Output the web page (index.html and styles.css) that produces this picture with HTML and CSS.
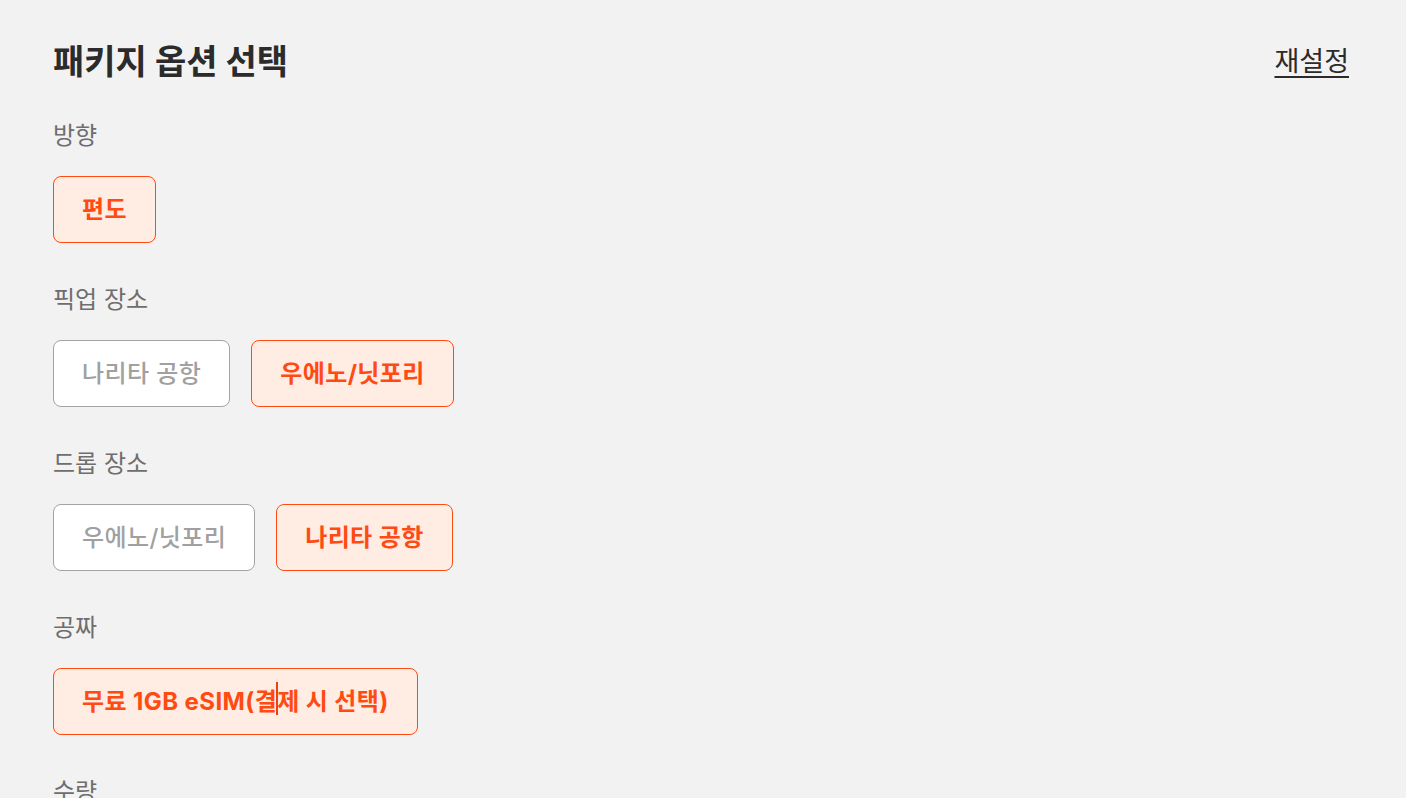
FILE: index.html
```html
<!DOCTYPE html>
<html lang="ko">
<head>
  <meta charset="UTF-8">
  <meta name="viewport" content="width=device-width, initial-scale=1.0">
  <title>패키지 옵션 선택</title>
  <link rel="stylesheet" href="styles.css">
</head>
<body>
  <div class="panel">
    <div class="panel-header">
      <h2>패키지 옵션 선택</h2>
      <a class="reset" href="#">재설정</a>
    </div>

    <div class="option-group">
      <div class="option-label">방향</div>
      <div class="option-list">
        <button class="chip active">편도</button>
      </div>
    </div>

    <div class="option-group">
      <div class="option-label">픽업 장소</div>
      <div class="option-list">
        <button class="chip">나리타 공항</button>
        <button class="chip active">우에노/닛포리</button>
      </div>
    </div>

    <div class="option-group">
      <div class="option-label">드롭 장소</div>
      <div class="option-list">
        <button class="chip">우에노/닛포리</button>
        <button class="chip active">나리타 공항</button>
      </div>
    </div>

    <div class="option-group">
      <div class="option-label">공짜</div>
      <div class="option-list">
        <button class="chip active">무료 1GB eSIM(결<span class="caret"></span>제 시 선택)</button>
      </div>
    </div>

    <div class="option-group">
      <div class="option-label">수량</div>
    </div>
  </div>
</body>
</html>
```

FILE: styles.css
```css
* {
  margin: 0;
  padding: 0;
  box-sizing: border-box;
}

body {
  background: #f2f2f2;
  font-family: Inter, "Noto Sans CJK KR", sans-serif;
  color: #333;
  height: 100vh;
  overflow: hidden;
}

.panel {
  padding: 34px 57px 0 53px;
}

.panel-header {
  display: flex;
  align-items: center;
  justify-content: space-between;
  height: 50px;
  margin-bottom: 36px;
}

h2 {
  font-size: 34px;
  font-weight: 700;
  color: #2b2b2b;
}

.reset {
  font-size: 27px;
  color: #2b2b2b;
  text-decoration: underline;
  text-underline-offset: 5px;
  text-decoration-thickness: 2px;
}

.option-group {
  margin-bottom: 41px;
}

.option-label {
  font-size: 24px;
  line-height: 32px;
  color: #6e6e6e;
  margin-bottom: 24px;
}

.option-list {
  display: flex;
  gap: 21px;
}

/* chip buttons */
.chip {
  height: 67px;
  padding: 0 28px;
  border: 1px solid #a3a3a3;
  border-radius: 8px;
  background: #fff;
  color: #a0a0a0;
  font-family: inherit;
  font-size: 24px;
  font-weight: 500;
  line-height: 31px;
  letter-spacing: 0.4px;
  cursor: pointer;
}

.chip.active {
  border-color: #ff4a12;
  background: #ffece2;
  color: #ff4a12;
  font-weight: 700;
}

/* text cursor sitting over the label */
.caret {
  position: relative;
}

.caret::after {
  content: '';
  position: absolute;
  left: -1px;
  top: -5px;
  width: 2px;
  height: 33px;
  background: #e8440c;
}
```
